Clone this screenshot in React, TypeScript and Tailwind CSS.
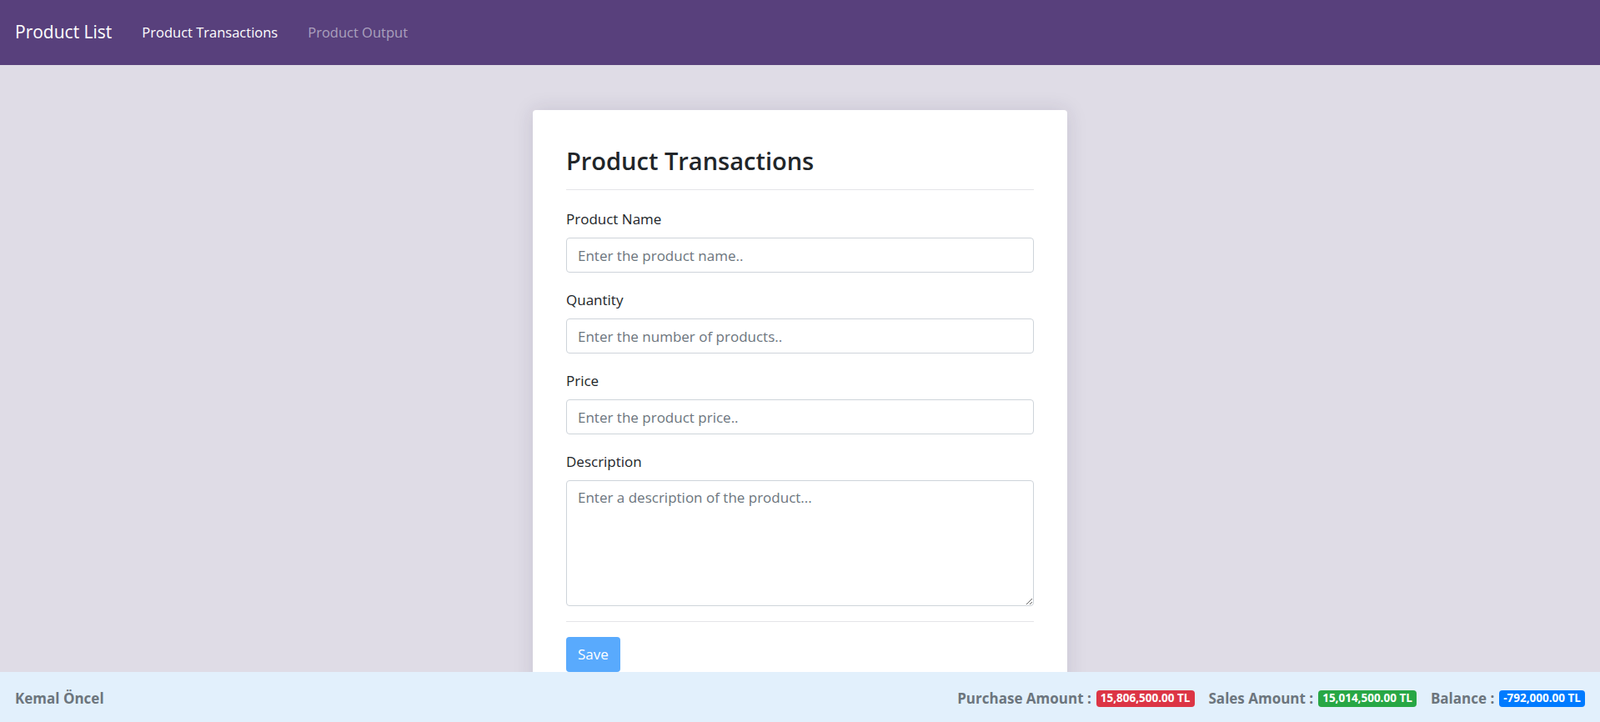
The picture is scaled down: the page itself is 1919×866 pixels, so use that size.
import React from "react";

const font = { fontFamily: '"Open Sans", "Noto Sans", Arial, sans-serif' };

function Field({ label, placeholder }: { label: string; placeholder: string }) {
  return (
    <div className="mb-[21px]">
      <label className="block text-[17px] leading-[24px] text-[#212529] mb-[10px]">{label}</label>
      <input
        className="block w-full h-[42px] px-[13px] text-[17px] text-[#495057] bg-white border border-[#ced4da] rounded-[4px] placeholder:text-[#6c757d] outline-none"
        placeholder={placeholder}
      />
    </div>
  );
}

export default function App() {
  return (
    <div style={font} className="h-[866px] w-full flex flex-col bg-[#dfdce6] overflow-hidden">
      <nav className="h-[78px] shrink-0 bg-[#58407c] flex items-center px-[18px] gap-[36px]">
        <span className="text-[21px] text-white">Product List</span>
        <span className="text-[16.5px] text-white">Product Transactions</span>
        <span className="text-[16.5px] text-[#aba0be]">Product Output</span>
      </nav>
      <main className="flex-1 overflow-hidden flex justify-center pt-[54px]">
        <div className="w-[641px] bg-white rounded-[4px] shadow-[0_0_24px_rgba(40,30,70,0.13)] px-[40px] pt-[42px] self-start">
          <h2 className="text-[29px] leading-[38px] font-semibold text-[#212529] mb-[15px]">Product Transactions</h2>
          <div className="h-px bg-[#e5e5e8] mb-[23px]" />
          <Field label="Product Name" placeholder="Enter the product name.." />
          <Field label="Quantity" placeholder="Enter the number of products.." />
          <Field label="Price" placeholder="Enter the product price.." />
          <div>
            <label className="block text-[17px] leading-[24px] text-[#212529] mb-[10px]">Description</label>
            <textarea
              className="block w-full h-[151px] px-[13px] py-[7px] text-[17px] text-[#495057] bg-white border border-[#ced4da] rounded-[4px] placeholder:text-[#6c757d] outline-none"
              placeholder="Enter a description of the product..."
            />
          </div>
          <div className="h-px bg-[#e5e5e8] mt-[18px] mb-[18px]" />
          <button className="h-[42px] px-[14px] rounded-[4px] bg-[#59aafd] text-white text-[17px] mb-[20px]">Save</button>
        </div>
      </main>
      <footer className="h-[60px] shrink-0 bg-[#e2f0fc] flex items-center justify-between px-[18px] pt-[4px]">
        <span className="text-[17px] font-bold text-[#6c757d]">Kemal Öncel</span>
        <div className="flex items-center text-[17px] font-bold text-[#6c757d]">
          <span>Purchase Amount :</span>
          <span className="ml-[6px] px-[5px] py-[3px] leading-none rounded-[4px] bg-[#dc3545] text-white text-[13.5px]">15,806,500.00 TL</span>
          <span className="ml-[17px]">Sales Amount :</span>
          <span className="ml-[6px] px-[5px] py-[3px] leading-none rounded-[4px] bg-[#28a745] text-white text-[13.5px]">15,014,500.00 TL</span>
          <span className="ml-[17px]">Balance :</span>
          <span className="ml-[6px] px-[5px] py-[3px] leading-none rounded-[4px] bg-[#007bff] text-white text-[13.5px]">-792,000.00 TL</span>
        </div>
      </footer>
    </div>
  );
}
